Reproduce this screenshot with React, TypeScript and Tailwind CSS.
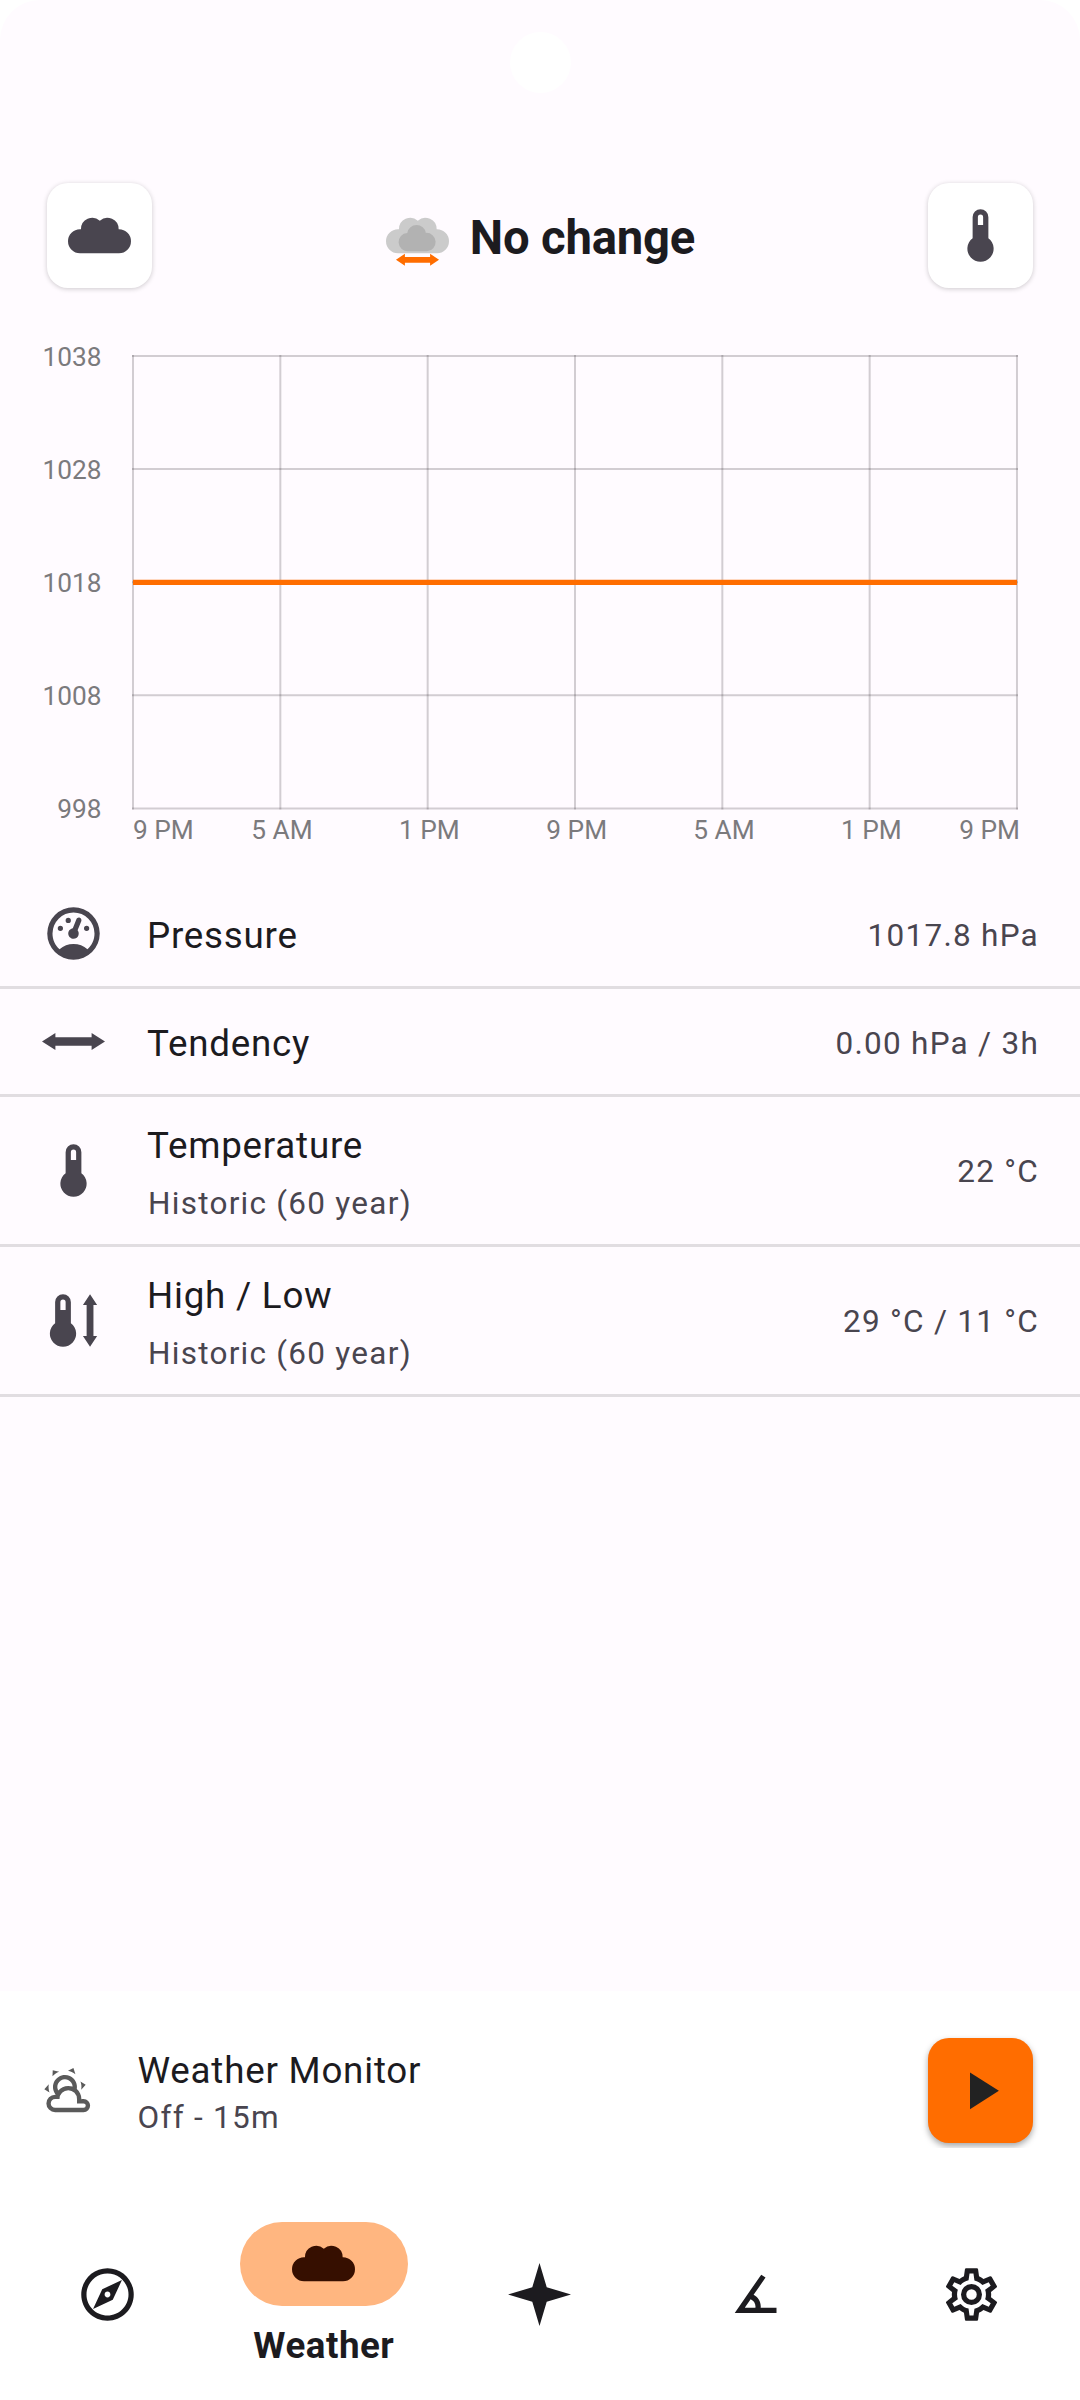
import type { ReactNode } from "react";

const COMPASS =
  "M12 10.9c-.61 0-1.1.49-1.1 1.1s.49 1.1 1.1 1.1c.61 0 1.1-.49 1.1-1.1s-.49-1.1-1.1-1.1zM12 2C6.48 2 2 6.48 2 12s4.48 10 10 10 10-4.48 10-10S17.52 2 12 2zm0 18c-4.41 0-8-3.59-8-8s3.59-8 8-8 8 3.59 8 8-3.59 8-8 8zm-5.5-2.5l7.51-3.49L17.5 6.5 9.99 9.99 6.5 17.5z";
const THERMOMETER =
  "M15 13V5A3 3 0 0 0 9 5V13A5 5 0 1 0 15 13M12 4A1 1 0 0 1 13 5V8H11V5A1 1 0 0 1 12 4Z";
const GAUGE =
  "M12,2A10,10 0 0,0 2,12A10,10 0 0,0 12,22A10,10 0 0,0 22,12A10,10 0 0,0 12,2M12,4A8,8 0 0,1 20,12C20,14.4 19,16.5 17.3,18C15.9,16.7 14,16 12,16C10,16 8.2,16.7 6.7,18C5,16.5 4,14.4 4,12A8,8 0 0,1 12,4M14,5.89C13.62,5.9 13.26,6.15 13.1,6.54L11.81,9.77L11.71,10C11,10.13 10.41,10.6 10.14,11.26C9.73,12.29 10.23,13.45 11.26,13.86C12.29,14.27 13.45,13.77 13.86,12.74C14.12,12.08 14,11.32 13.57,10.76L13.67,10.5L14.96,7.29L14.97,7.26C15.17,6.75 14.92,6.17 14.41,5.96C14.28,5.91 14.15,5.89 14,5.89M10,6A1,1 0 0,0 9,7A1,1 0 0,0 10,8A1,1 0 0,0 11,7A1,1 0 0,0 10,6M7,9A1,1 0 0,0 6,10A1,1 0 0,0 7,11A1,1 0 0,0 8,10A1,1 0 0,0 7,9M17,9A1,1 0 0,0 16,10A1,1 0 0,0 17,11A1,1 0 0,0 18,10A1,1 0 0,0 17,9Z";
const PARTLY_CLOUDY =
  "M12.74,5.47C15.1,6.5 16.35,9.03 15.92,11.46C17.19,12.56 18,14.19 18,16V16.17C18.31,16.06 18.65,16 19,16A3,3 0 0,1 22,19A3,3 0 0,1 19,22H6A4,4 0 0,1 2,18A4,4 0 0,1 6,14H6.27C5,12.45 4.6,10.24 5.5,8.26C6.72,5.5 9.97,4.24 12.74,5.47M11.93,7.3C10.16,6.5 8.09,7.31 7.31,9.07C6.85,10.09 6.93,11.22 7.41,12.13C8.5,10.83 10.16,10 12,10C12.7,10 13.38,10.12 14,10.34C13.94,9.06 13.18,7.86 11.93,7.3M13.55,3.64C13,3.4 12.45,3.23 11.88,3.12L14.37,1.82L15.27,4.71C14.76,4.29 14.19,3.93 13.55,3.64M6.09,4.44C5.6,4.79 5.17,5.19 4.8,5.63L4.91,2.82L7.87,3.5C7.25,3.71 6.65,4.03 6.09,4.44M18,9.71C17.91,9.12 17.78,8.55 17.59,8L19.97,9.5L17.92,11.73C18.03,11.08 18.05,10.4 18,9.71M3.04,11.3C3.11,11.9 3.24,12.47 3.43,13L1.06,11.5L3.1,9.28C3,9.93 2.97,10.61 3.04,11.3M19,18H16V16A4,4 0 0,0 12,12A4,4 0 0,0 8,16H6A2,2 0 0,0 4,18A2,2 0 0,0 6,20H19A1,1 0 0,0 20,19A1,1 0 0,0 19,18Z";
const ANGLE =
  "M20,19H4.09L14.18,4.43L15.82,5.57L11.28,12.13C12.89,12.96 14,14.62 14,16.54C14,16.7 14,16.85 13.97,17H20V19M7.91,17H11.96C12,16.85 12,16.7 12,16.54C12,15.28 11.24,14.22 10.14,13.78L7.91,17Z";
const COG =
  "M12,8A4,4 0 0,1 16,12A4,4 0 0,1 12,16A4,4 0 0,1 8,12A4,4 0 0,1 12,8M12,10A2,2 0 0,0 10,12A2,2 0 0,0 12,14A2,2 0 0,0 14,12A2,2 0 0,0 12,10M10,22C9.75,22 9.54,21.82 9.5,21.58L9.13,18.93C8.5,18.68 7.96,18.34 7.44,17.94L4.95,18.95C4.73,19.03 4.46,18.95 4.34,18.73L2.34,15.27C2.21,15.05 2.27,14.78 2.46,14.63L4.57,12.97L4.5,12L4.57,11L2.46,9.37C2.27,9.22 2.21,8.95 2.34,8.73L4.34,5.27C4.46,5.05 4.73,4.96 4.95,5.05L7.44,6.05C7.96,5.66 8.5,5.32 9.13,5.07L9.5,2.42C9.54,2.18 9.75,2 10,2H14C14.25,2 14.46,2.18 14.5,2.42L14.87,5.07C15.5,5.32 16.04,5.66 16.56,6.05L19.05,5.05C19.27,4.96 19.54,5.05 19.66,5.27L21.66,8.73C21.79,8.95 21.73,9.22 21.54,9.37L19.43,11L19.5,12L19.43,13L21.54,14.63C21.73,14.78 21.79,15.05 21.66,15.27L19.66,18.73C19.54,18.95 19.27,19.04 19.05,18.95L16.56,17.95C16.04,18.34 15.5,18.68 14.87,18.93L14.5,21.58C14.46,21.82 14.25,22 14,22H10M11.25,4L10.88,6.61C9.68,6.86 8.62,7.5 7.85,8.39L5.44,7.35L4.69,8.65L6.8,10.2C6.4,11.37 6.4,12.64 6.8,13.8L4.68,15.36L5.43,16.66L7.86,15.62C8.63,16.5 9.68,17.14 10.87,17.38L11.24,20H12.76L13.13,17.39C14.32,17.14 15.37,16.5 16.14,15.62L18.57,16.66L19.32,15.36L17.2,13.81C17.6,12.64 17.6,11.37 17.2,10.2L19.31,8.65L18.56,7.35L16.15,8.39C15.38,7.5 14.32,6.86 13.12,6.62L12.75,4H11.25Z";
const STAR = "M12 0L14.75 9.25L24 12L14.75 14.75L12 24L9.25 14.75L0 12L9.25 9.25Z";
const ARROW_H = "M0 12L5.1 8.8V10.4H18.9V8.8L24 12L18.9 15.2V13.6H5.1V15.2Z";
const HIGH_LOW =
  "M11 13V5A3 3 0 0 0 5 5V13A5 5 0 1 0 11 13M8 4A1 1 0 0 1 9 5V8H7V5A1 1 0 0 1 8 4ZM18.3 2L21 6.1H19.6V17.9H21L18.3 22L15.6 17.9H17V6.1H15.6Z";
const CLOUD =
  "M4.57 18.73A4.57 4.57 0 0 1 4.57 9.59L4.94 9.6A4.33 4.33 0 0 1 12.12 6.35A4.33 4.33 0 0 1 19.3 9.6L19.43 9.59A4.57 4.57 0 0 1 19.43 18.73Z";

function Icon({ d, className = "size-[63px]" }: { d: string; className?: string }) {
  return (
    <svg viewBox="0 0 24 24" fill="currentColor" fillRule="evenodd" className={`shrink-0 ${className}`}>
      <path d={d} />
    </svg>
  );
}

function SteadyIcon() {
  return (
    <svg viewBox="0 0 24 24" className="size-[63px] shrink-0">
      <path d={CLOUD} fill="#cbcbcb" />
      <path
        d="M8.5 18A3.5 3.5 0 0 1 8.1 11A3.6 3.6 0 0 1 15.2 11A3.5 3.5 0 0 1 15.6 18Z"
        fill="#b2b2b2"
      />
      <path
        d="M3.8 21.25L7.2 18.95V20.15H16.8V18.95L20.2 21.25L16.8 23.55V22.35H7.2V23.55Z"
        fill="#ff6d00"
      />
    </svg>
  );
}

const Y_LABELS = [1038, 1028, 1018, 1008, 998];
const X_LABELS = ["9 PM", "5 AM", "1 PM", "9 PM", "5 AM", "1 PM", "9 PM"];
const CHART = { left: 133, top: 26, stepX: 147.33, stepY: 113.1, right: 1017, bottom: 478.4 };

function PressureChart() {
  return (
    <svg viewBox="0 0 1080 551" className="block h-[551px] w-full shrink-0" fontFamily="Roboto, sans-serif">
      {Y_LABELS.map((label, i) => {
        const y = CHART.top + i * CHART.stepY;
        return (
          <g key={label}>
            <line x1={CHART.left - 1} x2={CHART.right + 1} y1={y} y2={y} stroke="#1c1b1f" strokeOpacity={0.2} strokeWidth={2} />
            <text x={101.5} y={y + 10} textAnchor="end" fontSize={26.25} fill="#7b7a7d">
              {label}
            </text>
          </g>
        );
      })}
      {X_LABELS.map((label, i) => {
        const x = CHART.left + i * CHART.stepX;
        const last = i === X_LABELS.length - 1;
        return (
          <g key={i}>
            <line x1={x} x2={x} y1={CHART.top - 1} y2={CHART.bottom + 1} stroke="#1c1b1f" strokeOpacity={0.2} strokeWidth={2} />
            <text
              x={i === 0 ? x : last ? x + 3 : x + 1.7}
              y={508.5}
              textAnchor={i === 0 ? "start" : last ? "end" : "middle"}
              fontSize={26.25}
              fill="#7b7a7d"
            >
              {label}
            </text>
          </g>
        );
      })}
      <line x1={CHART.left} x2={CHART.right} y1={252.3} y2={252.3} stroke="#ff6d00" strokeWidth={5.25} />
    </svg>
  );
}

function TileButton({ children }: { children: ReactNode }) {
  return (
    <button className="flex size-[105px] items-center justify-center rounded-[21px] bg-white text-[#49454f] shadow-[0_1px_5px_rgba(0,0,0,0.2)]">
      {children}
    </button>
  );
}

interface RowProps {
  icon: string;
  title: string;
  subtitle?: string;
  value: string;
}

const ROWS: RowProps[] = [
  { icon: GAUGE, title: "Pressure", value: "1017.8 hPa" },
  { icon: ARROW_H, title: "Tendency", value: "0.00 hPa / 3h" },
  { icon: THERMOMETER, title: "Temperature", subtitle: "Historic (60 year)", value: "22 °C" },
  { icon: HIGH_LOW, title: "High / Low", subtitle: "Historic (60 year)", value: "29 °C / 11 °C" },
];

function Row({ icon, title, subtitle, value }: RowProps) {
  return (
    <li
      className={`flex items-center border-b-[3px] border-[#e1dde1] pr-[41px] pl-[42px] text-[#49454f] ${
        subtitle ? "h-[150px]" : "h-[108px]"
      }`}
    >
      <Icon d={icon} />
      <div className={`ml-[42px] flex-1 ${subtitle ? "pt-[9px]" : "pt-1"}`}>
        <p className="text-[36.75px] leading-[57px] tracking-[0.021em] text-[#1c1b1f]">{title}</p>
        {subtitle && <p className="pl-px text-[31.5px] leading-[59px] tracking-[0.04em]">{subtitle}</p>}
      </div>
      <span className={`text-[31.5px] leading-10 tracking-[0.04em] ${subtitle ? "pt-[3px]" : "pt-[5px]"}`}>
        {value}
      </span>
    </li>
  );
}

function NavItem({ icon }: { icon: string }) {
  return (
    <button className="flex flex-1 justify-center pt-[115px] pr-px">
      <Icon d={icon} />
    </button>
  );
}

export default function App() {
  return (
    <div className="h-[2400px] w-[1080px] overflow-hidden bg-white font-[Roboto,sans-serif] text-[#1c1b1f]">
      <main className="flex h-[1991px] flex-col rounded-t-[40px] bg-[#fffbff]">
        {/* camera cutout */}
        <div className="mt-8 ml-[510px] size-[61px] shrink-0 rounded-full bg-white" />

        <header className="mt-[90px] flex h-[147px] shrink-0 items-start justify-between pr-[47px] pl-[47px]">
          <TileButton>
            <Icon d={CLOUD} />
          </TileButton>
          <div className="flex h-[105px] items-center gap-[21px] pl-px">
            <SteadyIcon />
            <h1 className="pt-1 text-[47.25px] leading-[56px] font-bold tracking-[-0.004em]">No change</h1>
          </div>
          <TileButton>
            <Icon d={THERMOMETER} />
          </TileButton>
        </header>

        <PressureChart />

        <ul>
          {ROWS.map((row) => (
            <Row key={row.title} {...row} />
          ))}
        </ul>
      </main>

      <section className="flex h-[157px] items-start overflow-hidden pt-[47px] pr-[47px] pl-[42px]">
        <Icon d={PARTLY_CLOUDY} className="mt-[26px] size-[52.5px] text-[#5a5a5a]" />
        <div className="ml-[43px] flex-1 pt-[9px]">
          <p className="text-[36.75px] leading-[48px] tracking-[0.021em]">Weather Monitor</p>
          <p className="text-[31.5px] leading-[46px] tracking-[0.04em] text-[#49454f]">Off - 15m</p>
        </div>
        <button className="flex size-[105px] items-center justify-center rounded-[21px] bg-[#ff6d00] text-[#222222] shadow-[0_3px_6px_rgba(0,0,0,0.35)]">
          <Icon d="M8,5.14V19.14L19,12.14L8,5.14Z" />
        </button>
      </section>

      <nav className="flex h-[252px]">
        <NavItem icon={COMPASS} />
        <button className="flex flex-1 flex-col items-center pt-[74px]">
          <span className="flex h-[84px] w-[168px] items-center justify-center rounded-full bg-[#ffb680] pr-px pb-px text-[#360f00]">
            <Icon d={CLOUD} />
          </span>
          <span className="mt-4 text-[36.75px] leading-[48px] font-bold tracking-[0.014em]">Weather</span>
        </button>
        <NavItem icon={STAR} />
        <NavItem icon={ANGLE} />
        <NavItem icon={COG} />
      </nav>
    </div>
  );
}
